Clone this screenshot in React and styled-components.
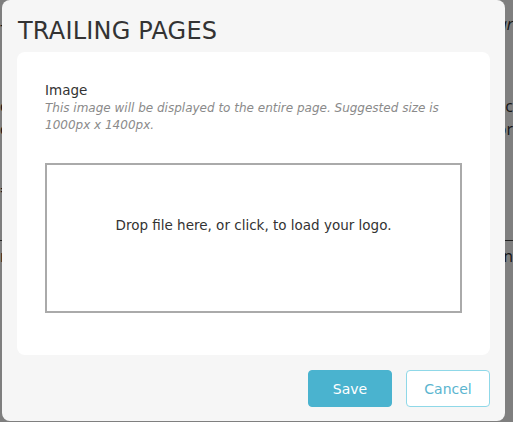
import React from "react";
import styled, { createGlobalStyle } from "styled-components";

const Global = createGlobalStyle`
  html, body { margin: 0; padding: 0; }
  body {
    width: 513px; height: 422px; overflow: hidden;
    font-family: "DejaVu Sans", "Open Sans", sans-serif;
    background: #ffffff;
  }
`;

const Page = styled.div`
  position: relative;
  width: 513px;
  height: 422px;
  overflow: hidden;
  background: #fff;
  font-family: "Open Sans", sans-serif;
  color: #2c2c2c;
`;

const Behind = styled.div`
  display: flex;
  flex-direction: column;
  padding: 14px 0 0 0;
`;

const BehindRow = styled.div`
  display: flex;
  justify-content: space-between;
  height: ${(p) => p.$h}px;
  align-items: center;
  font-size: 16px;
  font-style: ${(p) => (p.$italic ? "italic" : "normal")};
  border-bottom: ${(p) => (p.$line ? "1px solid #444" : "none")};
  white-space: nowrap;
`;

const Backdrop = styled.div`
  position: absolute;
  inset: 0;
  background: rgba(0, 0, 0, 0.5);
`;

const Modal = styled.div`
  position: absolute;
  left: 2px;
  top: 0;
  width: 503px;
  height: 421px;
  box-sizing: border-box;
  background: #f6f6f6;
  border-radius: 8px;
  padding: 14px 15px 14px 15px;
  display: flex;
  flex-direction: column;
  font-family: "DejaVu Sans", sans-serif;
`;

const Title = styled.h1`
  margin: 0 0 0 1px;
  font-size: 24px;
  font-weight: 400;
  line-height: 34px;
  letter-spacing: 0.2px;
  color: #333;
`;

const Card = styled.div`
  margin-top: 4px;
  background: #fff;
  border-radius: 8px;
  padding: 29px 28px 42px 28px;
  display: flex;
  flex-direction: column;
`;

const Label = styled.div`
  font-size: 13.5px;
  line-height: 18px;
  color: #333;
`;

const Hint = styled.div`
  font-size: 12px;
  font-style: italic;
  line-height: 17px;
  color: #8a8a8a;
  margin-top: 1px;
`;

const DropZone = styled.div`
  margin-top: 29px;
  height: 150px;
  box-sizing: border-box;
  border: 2px solid #aaaaaa;
  display: flex;
  align-items: center;
  justify-content: center;
  padding-bottom: 26px;
  font-size: 13.5px;
  color: #333;
`;

const Footer = styled.div`
  margin-top: auto;
  display: flex;
  justify-content: flex-end;
  gap: 14px;
`;

const Button = styled.button`
  width: 84px;
  height: 37px;
  border-radius: 4px;
  font-family: "DejaVu Sans", sans-serif;
  font-size: 14px;
  cursor: pointer;
  background: ${(p) => (p.$primary ? "#4ab3cf" : "#ffffff")};
  color: ${(p) => (p.$primary ? "#ffffff" : "#5ab5cf")};
  border: 1px solid ${(p) => (p.$primary ? "#4ab3cf" : "#8fd8e8")};
`;

export default function App() {
  return (
    <Page>
      <Global />
      <Behind>
        <BehindRow $h={20} $italic><span>—</span><span>ar</span></BehindRow>
        <BehindRow $h={60}><span>|</span><span></span></BehindRow>
        <BehindRow $h={24}><span>o</span><span>c</span></BehindRow>
        <BehindRow $h={22}><span>o</span><span>or</span></BehindRow>
        <BehindRow $h={100} $line><span>=</span><span></span></BehindRow>
        <BehindRow $h={30}><span>n</span><span>n</span></BehindRow>
      </Behind>
      <Backdrop />
      <Modal>
        <Title>TRAILING PAGES</Title>
        <Card>
          <Label>Image</Label>
          <Hint>
            This image will be displayed to the entire page. Suggested size is
            1000px x 1400px.
          </Hint>
          <DropZone>Drop file here, or click, to load your logo.</DropZone>
        </Card>
        <Footer>
          <Button $primary>Save</Button>
          <Button>Cancel</Button>
        </Footer>
      </Modal>
    </Page>
  );
}
